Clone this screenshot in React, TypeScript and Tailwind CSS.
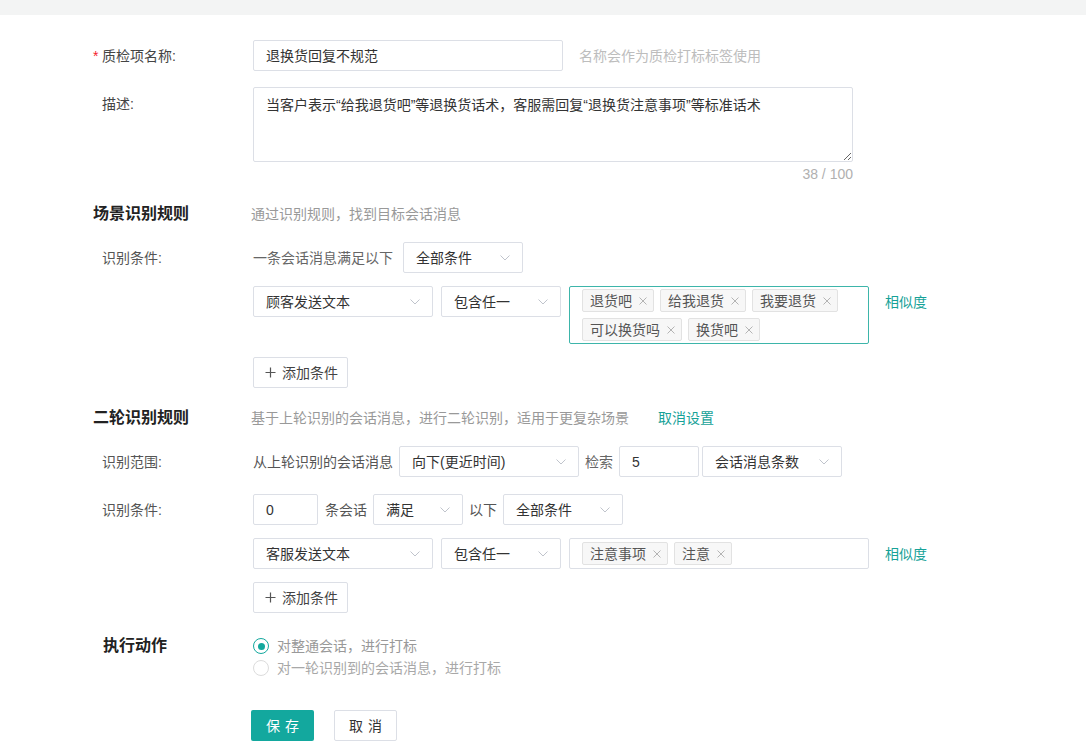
import React from 'react';

const Chevron = () => (
  <svg width="10" height="6" viewBox="0 0 10 6" fill="none">
    <path d="M0.5 0.5L5 5L9.5 0.5" stroke="#c0c4cc" strokeWidth="1" />
  </svg>
);

const CloseIcon = () => (
  <svg width="8" height="8" viewBox="0 0 8 8" fill="none">
    <path d="M0.5 0.5L7.5 7.5M7.5 0.5L0.5 7.5" stroke="#b4b4b4" strokeWidth="1" />
  </svg>
);

const PlusIcon = () => (
  <svg width="11" height="11" viewBox="0 0 11 11" fill="none">
    <path d="M5.5 0.5V10.5M0.5 5.5H10.5" stroke="#555" strokeWidth="1.2" />
  </svg>
);

const Select = ({ text, className }: { text: string; className: string }) => (
  <div
    className={`flex h-[31px] shrink-0 items-center justify-between rounded-[2px] border border-[#dcdfe6] bg-white px-[12px] text-[#333] ${className}`}
  >
    <span>{text}</span>
    <Chevron />
  </div>
);

const TextBox = ({ text, className }: { text: string; className: string }) => (
  <div
    className={`flex h-[31px] shrink-0 items-center rounded-[2px] border border-[#dcdfe6] bg-white px-[12px] text-[#333] ${className}`}
  >
    {text}
  </div>
);

const Tag = ({ text }: { text: string }) => (
  <span className="flex h-[23px] items-center gap-[7px] rounded-[2px] border border-[#e2e2e2] bg-[#f7f7f7] pl-[7px] pr-[6px] text-[#555]">
    {text}
    <CloseIcon />
  </span>
);

const AddButton = () => (
  <div className="flex h-[31px] w-[95px] items-center gap-[6px] rounded-[2px] border border-[#dcdfe6] bg-white pl-[11px] text-[#444]">
    <PlusIcon />
    <span>添加条件</span>
  </div>
);

const Label = ({ children }: { children: React.ReactNode }) => (
  <div className="w-[160px] shrink-0 pl-[9px] text-[#555]">{children}</div>
);

const SectionTitle = ({ title, desc, extra }: { title: string; desc: string; extra?: string }) => (
  <div className="flex h-[24px] items-center">
    <div className="w-[158px] shrink-0 text-[16px] font-bold text-[#222]">{title}</div>
    <div className="text-[#999]">{desc}</div>
    {extra && <div className="ml-[29px] text-[#16a298]">{extra}</div>}
  </div>
);

const ConditionRow = ({ field, tags, active }: { field: string; tags: string[]; active?: boolean }) => (
  <div className="flex items-start pl-[160px]">
    <Select text={field} className="w-[180px]" />
    <Select text="包含任一" className="ml-[8px] w-[120px]" />
    <div
      className={`ml-[8px] flex min-h-[31px] w-[300px] shrink-0 flex-wrap items-center gap-[6px] rounded-[2px] border bg-white py-[2px] pl-[12px] pr-[8px] ${
        active ? 'border-[#3db5aa]' : 'border-[#dcdfe6]'
      }`}
    >
      {tags.map((t) => (
        <Tag key={t} text={t} />
      ))}
    </div>
    <div className="ml-[16px] flex h-[31px] items-center text-[#16a298]">相似度</div>
  </div>
);

const App: React.FC = () => {
  return (
    <div className="min-h-screen bg-white text-[14px] leading-[20px] text-[#333] font-['Liberation_Sans','Noto_Sans_CJK_SC',sans-serif]">
      <div className="h-[15px] bg-[#f3f4f4]" />

      <div className="pl-[93px] pt-[25px]">
        {/* 质检项名称 */}
        <div className="flex items-center">
          <div className="flex w-[160px] shrink-0 items-center text-[#444]">
            <span className="w-[9px] text-[#f5222d]">*</span>
            <span>质检项名称:</span>
          </div>
          <TextBox text="退换货回复不规范" className="w-[310px]" />
          <div className="ml-[16px] text-[#bdbdbd]">名称会作为质检打标标签使用</div>
        </div>

        {/* 描述 */}
        <div className="mt-[16px] flex items-start">
          <div className="w-[160px] shrink-0 pl-[9px] pt-[7px] text-[#444]">描述:</div>
          <div className="w-[600px]">
            <textarea
              readOnly
              defaultValue="当客户表示“给我退货吧”等退换货话术，客服需回复“退换货注意事项”等标准话术"
              className="block h-[75px] w-[600px] resize-y rounded-[2px] border border-[#dcdfe6] px-[12px] py-[7px] text-[#333] outline-none"
            />
            <div className="mt-[2px] text-right text-[#b0b0b0]">38 / 100</div>
          </div>
        </div>

        {/* 场景识别规则 */}
        <div className="mt-[18px]">
          <SectionTitle title="场景识别规则" desc="通过识别规则，找到目标会话消息" />
        </div>

        <div className="mt-[16px] flex items-center">
          <Label>识别条件:</Label>
          <span className="text-[#666]">一条会话消息满足以下</span>
          <Select text="全部条件" className="ml-[10px] w-[120px]" />
        </div>

        <div className="mt-[13px]">
          <ConditionRow field="顾客发送文本" tags={['退货吧', '给我退货', '我要退货', '可以换货吗', '换货吧']} active />
        </div>

        <div className="mt-[13px] pl-[160px]">
          <AddButton />
        </div>

        {/* 二轮识别规则 */}
        <div className="mt-[18px]">
          <SectionTitle
            title="二轮识别规则"
            desc="基于上轮识别的会话消息，进行二轮识别，适用于更复杂场景"
            extra="取消设置"
          />
        </div>

        <div className="mt-[16px] flex items-center">
          <Label>识别范围:</Label>
          <span className="text-[#555]">从上轮识别的会话消息</span>
          <Select text="向下(更近时间)" className="ml-[6px] w-[180px]" />
          <span className="ml-[6px] text-[#666]">检索</span>
          <TextBox text="5" className="ml-[6px] w-[80px]" />
          <Select text="会话消息条数" className="ml-[3px] w-[140px]" />
        </div>

        <div className="mt-[17px] flex items-center">
          <Label>识别条件:</Label>
          <TextBox text="0" className="w-[65px]" />
          <span className="ml-[7px] text-[#555]">条会话</span>
          <Select text="满足" className="ml-[6px] w-[90px]" />
          <span className="ml-[6px] text-[#555]">以下</span>
          <Select text="全部条件" className="ml-[6px] w-[120px]" />
        </div>

        <div className="mt-[13px]">
          <ConditionRow field="客服发送文本" tags={['注意事项', '注意']} />
        </div>

        <div className="mt-[13px] pl-[160px]">
          <AddButton />
        </div>

        {/* 执行动作 */}
        <div className="mt-[22px] flex items-start">
          <div className="w-[160px] shrink-0 pl-[10px] text-[16px] font-bold leading-[22px] text-[#222]">执行动作</div>
          <div className="flex flex-col">
            <div className="flex h-[22px] items-center gap-[8px] text-[#999]">
              <span className="flex h-[16px] w-[16px] items-center justify-center rounded-full border-[1.5px] border-[#13a89e]">
                <span className="h-[7px] w-[7px] rounded-full bg-[#13a89e]" />
              </span>
              <span>对整通会话，进行打标</span>
            </div>
            <div className="flex h-[22px] items-center gap-[8px] text-[#a8a8a8]">
              <span className="h-[16px] w-[16px] rounded-full border border-[#dcdcdc]" />
              <span>对一轮识别到的会话消息，进行打标</span>
            </div>
          </div>
        </div>

        {/* 按钮 */}
        <div className="mt-[31px] flex items-center gap-[20px] pl-[158px]">
          <div className="flex h-[31px] w-[63px] items-center justify-center rounded-[2px] bg-[#13a89e] pl-[5px] tracking-[5px] text-white">
            保存
          </div>
          <div className="flex h-[31px] w-[63px] items-center justify-center rounded-[2px] border border-[#dcdfe6] bg-white pl-[5px] tracking-[5px] text-[#333]">
            取消
          </div>
        </div>
      </div>
    </div>
  );
};

export default App;
